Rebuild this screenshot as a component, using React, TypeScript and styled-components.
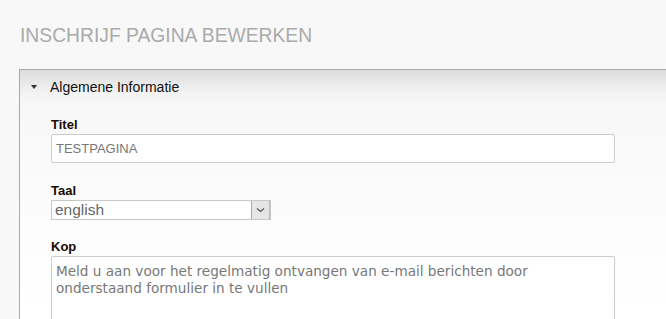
import React from "react";
import styled, { createGlobalStyle } from "styled-components";

const GlobalStyle = createGlobalStyle`
  html, body {
    margin: 0;
    padding: 0;
    background: #f8f8f8;
    overflow: hidden;
  }
  body {
    font-family: "Liberation Sans", Arial, sans-serif;
  }
`;

const Page = styled.div`
  padding: 25px 0 0 19px;
  width: 700px;
`;

const PageTitle = styled.h1`
  margin: 0 0 23px 1px;
  font-size: 19.3px;
  font-weight: normal;
  color: #aaaaaa;
  line-height: 21px;
`;

const Panel = styled.section`
  border-top: 1px solid #aaaaaa;
  border-left: 1px solid #aaaaaa;
  background: linear-gradient(180deg, #f6f6f6 0px, #fbfbfb 120px, #ffffff 240px);
`;

const PanelHeader = styled.div`
  display: flex;
  align-items: center;
  height: 33px;
  padding-left: 11px;
  background: linear-gradient(180deg, #dcdcdc 0%, #f3f3f3 70%, #f6f6f6 100%);
  font-size: 14px;
  color: #111;
`;

const Caret = styled.span`
  width: 0;
  height: 0;
  border-left: 3.5px solid transparent;
  border-right: 3.5px solid transparent;
  border-top: 4px solid #333;
  margin-right: 13px;
`;

const PanelBody = styled.div`
  padding: 14px 0 0 31px;
  display: flex;
  flex-direction: column;
`;

const Field = styled.div<{ $gap?: number }>`
  display: flex;
  flex-direction: column;
  margin-bottom: ${({ $gap }) => $gap ?? 0}px;
`;

const Label = styled.label`
  font-size: 13px;
  font-weight: bold;
  color: #1a0a00;
  line-height: 15px;
  margin-bottom: 2px;
`;

const TextInput = styled.input`
  box-sizing: border-box;
  width: 564px;
  height: 29px;
  margin: 0;
  border: 1px solid #cccccc;
  border-radius: 2px;
  background: #fff;
  padding: 0 4px;
  font-family: "Liberation Sans", Arial, sans-serif;
  font-size: 13px;
  color: #777;
  outline: none;
`;

const SelectBox = styled.div`
  box-sizing: border-box;
  width: 220px;
  height: 20px;
  display: flex;
  align-items: stretch;
  border: 1px solid #c8c8c8;
  background: #fff;
`;

const SelectValue = styled.span`
  flex: 1;
  padding-left: 3px;
  font-size: 15.5px;
  line-height: 18px;
  color: #666;
`;

const SelectArrow = styled.span`
  width: 17px;
  display: flex;
  align-items: center;
  justify-content: center;
  background: #e6e6e6;
  border-left: 1px solid #aaaaaa;
  border-right: 1px solid #bbbbbb;
`;

const TextArea = styled.textarea`
  box-sizing: border-box;
  display: block;
  width: 564px;
  height: 80px;
  margin: 0;
  border: 1px solid #cccccc;
  border-radius: 2px;
  background: #fff;
  padding: 6px 4px 4px;
  font-family: "DejaVu Sans", Verdana, sans-serif;
  font-size: 13.6px;
  line-height: 17px;
  color: #777;
  resize: none;
  outline: none;
`;

const App: React.FC = () => {
  return (
    <>
      <GlobalStyle />
      <Page>
        <PageTitle>INSCHRIJF PAGINA BEWERKEN</PageTitle>
        <Panel>
          <PanelHeader>
            <Caret />
            Algemene Informatie
          </PanelHeader>
          <PanelBody>
            <Field $gap={20}>
              <Label>Titel</Label>
              <TextInput defaultValue="TESTPAGINA" />
            </Field>
            <Field $gap={19}>
              <Label>Taal</Label>
              <SelectBox>
                <SelectValue>english</SelectValue>
                <SelectArrow>
                  <svg width="9" height="6" viewBox="0 0 9 6">
                    <path d="M1 1.5 L4.5 4.5 L8 1.5" fill="none" stroke="#555" strokeWidth="1.2" />
                  </svg>
                </SelectArrow>
              </SelectBox>
            </Field>
            <Field>
              <Label>Kop</Label>
              <TextArea defaultValue="Meld u aan voor het regelmatig ontvangen van e-mail berichten door onderstaand formulier in te vullen" />
            </Field>
          </PanelBody>
        </Panel>
      </Page>
    </>
  );
};

export default App;
